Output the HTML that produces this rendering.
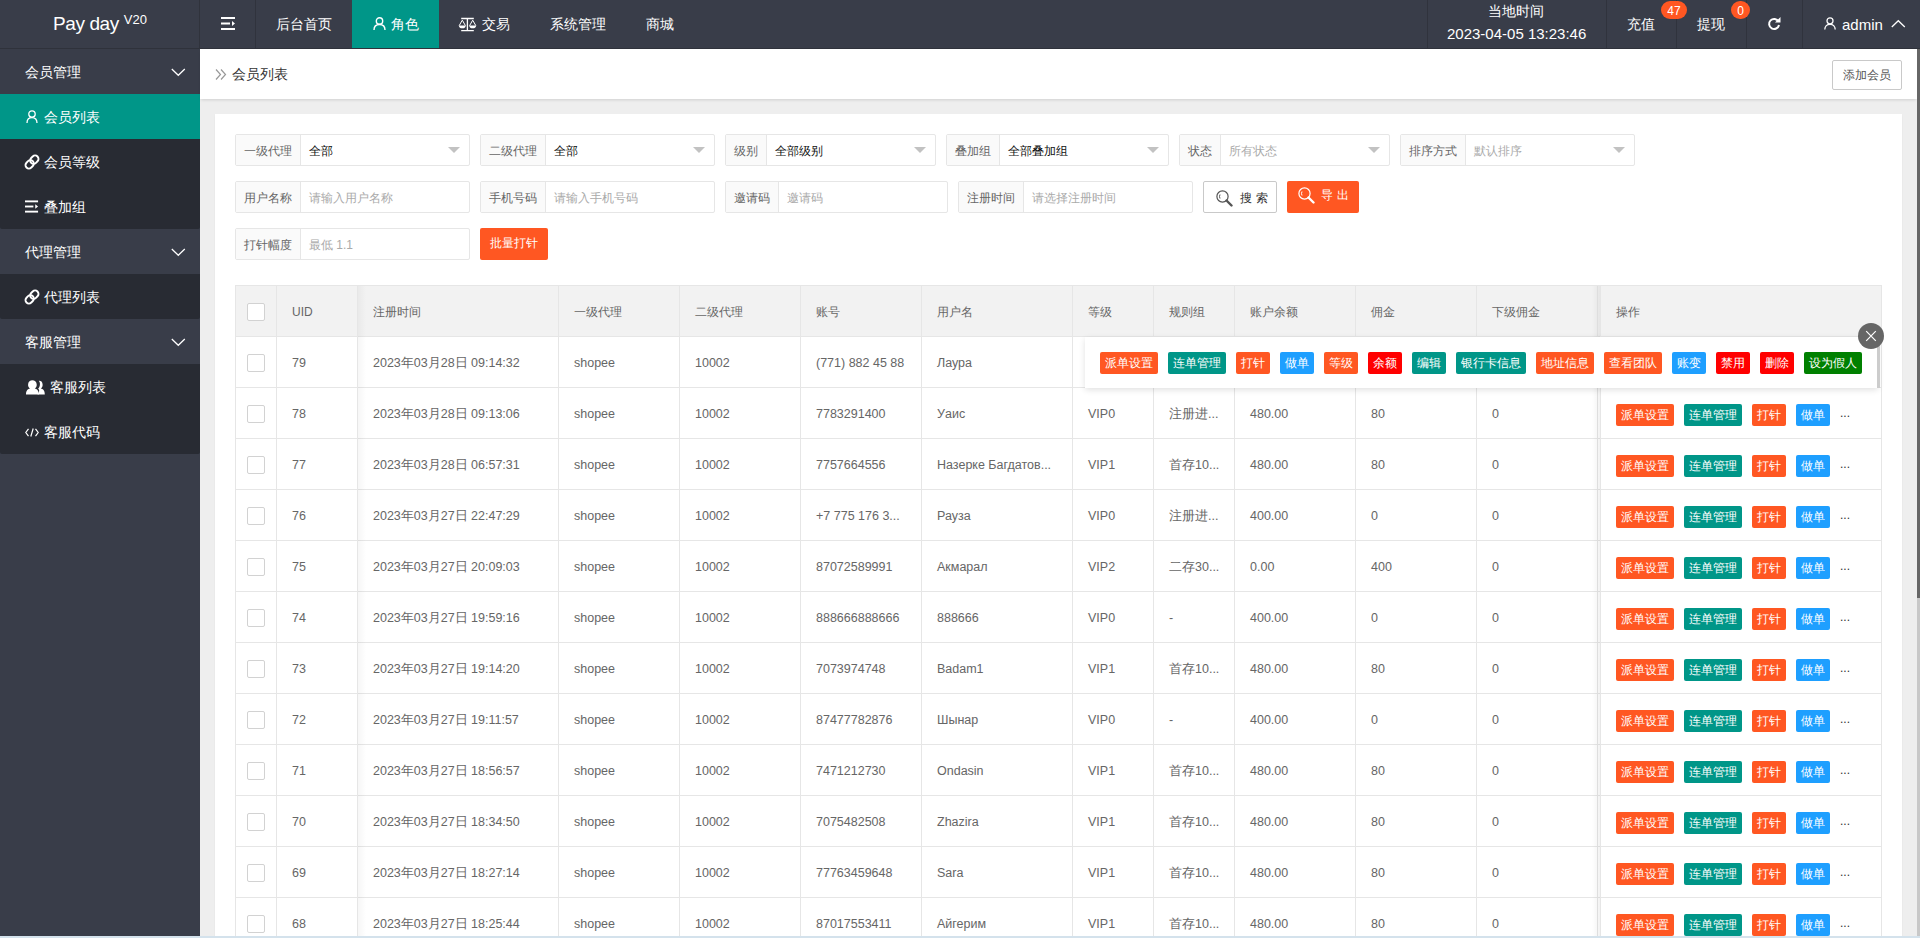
<!DOCTYPE html><html><head><meta charset="utf-8"><title>会员列表</title><style>
*{box-sizing:border-box;margin:0;padding:0}
html,body{width:1920px;height:938px;overflow:hidden;background:#eeeeee;font-family:"Liberation Sans",sans-serif;}
.a{position:absolute}
#hdr{left:0;top:0;width:1920px;height:49px;background:#393D49;border-bottom:1px solid #2f323b}
#side{left:0;top:49px;width:200px;height:889px;background:#393D49}
.nt{color:#fff;font-size:14px;white-space:nowrap;line-height:14px}
.logo{left:53px;top:13px;color:#fff;font-size:19px;letter-spacing:-0.4px;white-space:nowrap;line-height:22px}
.logo sup{font-size:13px;position:relative;top:-4px;vertical-align:top;margin-left:5px;letter-spacing:0}
.vsep{width:1px;height:48px;top:0;background:#30333d}
#crumb{left:200px;top:49px;width:1717px;height:50px;background:#fff;box-shadow:0 2px 3px -1px rgba(0,0,0,.13)}
#card{left:215px;top:114px;width:1687px;height:900px;background:#fff;box-shadow:0 1px 2px rgba(0,0,0,.05)}
.box{height:32px;border:1px solid #e6e6e6;border-radius:2px;background:#fff;top:0}
.lbl{position:absolute;left:0;top:0;height:30px;background:#FAFAFA;border-right:1px solid #e6e6e6;color:#666;font-size:12px;line-height:32px;padding-left:8px;white-space:nowrap}
.val{position:absolute;top:1px;height:30px;font-size:12px;line-height:30px;white-space:nowrap;color:#333}
.ph{color:#aaa}
.caret{position:absolute;top:12px;width:0;height:0;border-left:6px solid transparent;border-right:6px solid transparent;border-top:6px solid #c2c2c2}
.btnxs{position:absolute;height:22px;line-height:22px;font-size:12px;color:#fff;border-radius:2px;padding:0 5px;white-space:nowrap}
.or{background:#FF5722}.tl{background:#009688}.bl{background:#1E9FFF}.rd{background:#FF0000}.gr{background:#008000}
.cell{position:absolute;font-size:12.5px;color:#666;white-space:nowrap;line-height:16px}
.hcell{position:absolute;font-size:12px;color:#666;white-space:nowrap;line-height:16px}
.cb{position:absolute;width:18px;height:18px;border:1px solid #d2d2d2;border-radius:2px;background:#fff}
</style></head><body>
<div id="hdr" class="a"></div>
<div class="a logo">Pay day<sup>V20</sup></div>
<div class="a vsep" style="left:199px;height:938px;background:#30333c"></div>
<svg class="a" style="left:221px;top:17px" width="15" height="13" viewBox="0 0 15 13"><rect x="0" y="0" width="14" height="2" fill="#fff"/><rect x="0" y="5.5" width="9" height="2" fill="#fff"/><rect x="0" y="11" width="14" height="2" fill="#fff"/><path d="M11 4 L14 6.5 L11 9Z" fill="#fff"/></svg>
<div class="a vsep" style="left:255px"></div>
<div class="a nt" style="left:276px;top:17px">后台首页</div>
<div class="a" style="left:352px;top:0;width:87px;height:48px;background:#009688"></div>
<svg class="a" style="left:373px;top:17px" width="13" height="13" viewBox="0 0 13 13"><circle cx="6.5" cy="4" r="3.2" fill="none" stroke="#fff" stroke-width="1.4"/><path d="M1 13 C1 9 3.5 7.5 6.5 7.5 C9.5 7.5 12 9 12 13" fill="none" stroke="#fff" stroke-width="1.4"/></svg>
<div class="a nt" style="left:391px;top:17px">角色</div>
<svg class="a" style="left:458px;top:17px" width="19" height="15" viewBox="0 0 19 15"><path d="M3.2 1.5 H15.8 M9.4 1 V13.6 M3.2 13.6 H15.8" stroke="#fff" stroke-width="1.3" fill="none"/><path d="M4.3 3.2 L1.2 8.6 M4.3 3.2 L7.4 8.6 M14.7 3.2 L11.6 8.6 M14.7 3.2 L17.8 8.6" stroke="#fff" stroke-width="1" fill="none"/><path d="M0.8 8.4 H7.8 C7.6 10.4 6.2 11.3 4.3 11.3 C2.4 11.3 1 10.4 0.8 8.4Z M11.2 8.4 H18.2 C18 10.4 16.6 11.3 14.7 11.3 C12.8 11.3 11.4 10.4 11.2 8.4Z" fill="#fff"/></svg>
<div class="a nt" style="left:482px;top:17px">交易</div>
<div class="a nt" style="left:550px;top:17px">系统管理</div>
<div class="a nt" style="left:646px;top:17px">商城</div>
<div class="a vsep" style="left:1427px"></div>
<div class="a vsep" style="left:1606px"></div>
<div class="a vsep" style="left:1676px"></div>
<div class="a vsep" style="left:1746px"></div>
<div class="a vsep" style="left:1802px"></div>
<div class="a nt" style="left:1488px;top:4px">当地时间</div>
<div class="a nt" style="left:1447px;top:26px;font-size:15px;line-height:16px">2023-04-05 13:23:46</div>
<div class="a nt" style="left:1627px;top:17px">充值</div>
<div class="a" style="left:1661px;top:1px;width:26px;height:18px;border-radius:9px;background:#FF5722;color:#fff;font-size:12px;line-height:20px;text-align:center">47</div>
<div class="a nt" style="left:1697px;top:17px">提现</div>
<div class="a" style="left:1731px;top:1px;width:19px;height:18px;border-radius:9px;background:#FF5722;color:#fff;font-size:12px;line-height:20px;text-align:center">0</div>
<svg class="a" style="left:1767px;top:16px" width="14" height="15" viewBox="0 0 14 15"><path d="M11.5 5.5 A5 5 0 1 0 12 9" fill="none" stroke="#fff" stroke-width="2"/><path d="M13.5 1 V6.5 H8Z" fill="#fff"/></svg>
<svg class="a" style="left:1824px;top:17px" width="12" height="13" viewBox="0 0 12 13"><circle cx="6" cy="3.8" r="3" fill="none" stroke="#fff" stroke-width="1.3"/><path d="M0.8 12.6 C0.8 9 3 7.3 6 7.3 C9 7.3 11.2 9 11.2 12.6" fill="none" stroke="#fff" stroke-width="1.3"/></svg>
<div class="a nt" style="left:1842px;top:16px;font-size:15px;line-height:18px">admin</div>
<svg class="a" style="left:1891px;top:19px" width="15" height="9" viewBox="0 0 15 9"><path d="M0.8 8 L7.3 1.7 L13.8 8" fill="none" stroke="#fff" stroke-width="1.3"/></svg>
<div id="side" class="a"></div>
<div class="a" style="left:0;top:94px;width:200px;height:135px;background:#282B33;border-radius:0 0 2px 2px"></div>
<div class="a" style="left:0;top:274px;width:200px;height:45px;background:#282B33;border-radius:0 0 2px 2px"></div>
<div class="a" style="left:0;top:364px;width:200px;height:90px;background:#282B33;border-radius:0 0 2px 2px"></div>
<div class="a" style="left:0;top:94px;width:200px;height:45px;background:#009688"></div>
<div class="a nt" style="left:25px;top:65px">会员管理</div>
<svg class="a" style="left:171px;top:68px" width="15" height="9" viewBox="0 0 15 9"><path d="M0.8 1 L7.3 7.3 L13.8 1" fill="none" stroke="#fff" stroke-width="1.25"/></svg>
<div class="a nt" style="left:44px;top:110px">会员列表</div>
<div class="a nt" style="left:44px;top:155px">会员等级</div>
<div class="a nt" style="left:44px;top:200px">叠加组</div>
<div class="a nt" style="left:25px;top:245px">代理管理</div>
<svg class="a" style="left:171px;top:248px" width="15" height="9" viewBox="0 0 15 9"><path d="M0.8 1 L7.3 7.3 L13.8 1" fill="none" stroke="#fff" stroke-width="1.25"/></svg>
<div class="a nt" style="left:44px;top:290px">代理列表</div>
<div class="a nt" style="left:25px;top:335px">客服管理</div>
<svg class="a" style="left:171px;top:338px" width="15" height="9" viewBox="0 0 15 9"><path d="M0.8 1 L7.3 7.3 L13.8 1" fill="none" stroke="#fff" stroke-width="1.25"/></svg>
<div class="a nt" style="left:50px;top:380px">客服列表</div>
<div class="a nt" style="left:44px;top:425px">客服代码</div>
<svg class="a" style="left:26px;top:110px" width="12" height="13" viewBox="0 0 12 13"><circle cx="6" cy="4" r="3.2" fill="none" stroke="#fff" stroke-width="1.3"/><path d="M1 13 C1 9 3 7.6 6 7.6 C9 7.6 11 9 11 13" fill="none" stroke="#fff" stroke-width="1.3"/></svg>
<svg class="a" style="left:24px;top:154px" width="16" height="16" viewBox="0 0 16 16"><g transform="rotate(-45 8 8)" fill="none" stroke="#fff" stroke-width="1.9"><rect x="0.2" y="4.6" width="9" height="6.8" rx="3.4"/><rect x="6.8" y="4.6" width="9" height="6.8" rx="3.4"/></g></svg>
<svg class="a" style="left:24px;top:289px" width="16" height="16" viewBox="0 0 16 16"><g transform="rotate(-45 8 8)" fill="none" stroke="#fff" stroke-width="1.9"><rect x="0.2" y="4.6" width="9" height="6.8" rx="3.4"/><rect x="6.8" y="4.6" width="9" height="6.8" rx="3.4"/></g></svg>
<svg class="a" style="left:25px;top:200px" width="14" height="13" viewBox="0 0 15 13"><rect x="0" y="0" width="14" height="2" fill="#fff"/><rect x="0" y="5.5" width="9" height="2" fill="#fff"/><rect x="0" y="11" width="14" height="2" fill="#fff"/><path d="M11 4 L14 6.5 L11 9Z" fill="#fff"/></svg>
<svg class="a" style="left:26px;top:380px" width="19" height="15" viewBox="0 0 19 15"><path d="M11.5 14.5 H18.8 C18.8 10.5 17 9 14.8 8.6 C16.2 7.6 16.8 6.2 16.6 4.2 C16.4 1.8 14.8 0.6 12.8 0.8 C13.8 2 14.2 3.6 13.8 5.4 C13.5 7 12.8 8 12 8.6 C13.5 9.6 13.8 11.5 11.5 14.5Z" fill="#fff"/><path d="M0 14.5 H12.8 C12.8 10.5 10.8 9 8.8 8.6 C10.2 7.6 10.9 6.2 10.7 4.2 C10.5 1.6 8.6 0.3 6.4 0.3 C4.2 0.3 2.3 1.6 2.1 4.2 C1.9 6.2 2.6 7.6 4 8.6 C2 9 0 10.5 0 14.5Z" fill="#fff"/></svg>
<svg class="a" style="left:25px;top:428px" width="14" height="9" viewBox="0 0 14 9"><path d="M3.5 0.8 L0.8 4.5 L3.5 8.2 M10.5 0.8 L13.2 4.5 L10.5 8.2 M8.2 0.5 L5.8 8.5" fill="none" stroke="#fff" stroke-width="1.2"/></svg>
<div id="crumb" class="a"></div>
<svg class="a" style="left:215px;top:69px" width="12" height="11" viewBox="0 0 12 11"><path d="M1 0.5 L5.5 5.5 L1 10.5 M6 0.5 L10.5 5.5 L6 10.5" fill="none" stroke="#999" stroke-width="1.2"/></svg>
<div class="a" style="left:232px;top:66px;font-size:14px;line-height:16px;color:#333;white-space:nowrap">会员列表</div>
<div class="a" style="left:1832px;top:60px;width:70px;height:30px;border:1px solid #c9c9c9;border-radius:2px;background:#fff;color:#555;font-size:12px;line-height:28px;text-align:center">添加会员</div>
<div id="card" class="a"></div>
<div class="a" style="left:1917px;top:49px;width:3px;height:549px;background:#666"></div>
<div class="a" style="left:1917px;top:598px;width:3px;height:338px;background:#c8c8c8"></div>
<div class="a box" style="left:235px;top:134px;width:235px"><div class="lbl" style="width:65px">一级代理</div><div class="val" style="left:73px"><span style="color:#111">全部</span></div><div class="caret" style="left:212px"></div></div>
<div class="a box" style="left:480px;top:134px;width:235px"><div class="lbl" style="width:65px">二级代理</div><div class="val" style="left:73px"><span style="color:#111">全部</span></div><div class="caret" style="left:212px"></div></div>
<div class="a box" style="left:725px;top:134px;width:211px"><div class="lbl" style="width:41px">级别</div><div class="val" style="left:49px"><span style="color:#111">全部级别</span></div><div class="caret" style="left:188px"></div></div>
<div class="a box" style="left:946px;top:134px;width:223px"><div class="lbl" style="width:53px">叠加组</div><div class="val" style="left:61px"><span style="color:#111">全部叠加组</span></div><div class="caret" style="left:200px"></div></div>
<div class="a box" style="left:1179px;top:134px;width:211px"><div class="lbl" style="width:41px">状态</div><div class="val ph" style="left:49px">所有状态</div><div class="caret" style="left:188px"></div></div>
<div class="a box" style="left:1400px;top:134px;width:235px"><div class="lbl" style="width:65px">排序方式</div><div class="val ph" style="left:73px">默认排序</div><div class="caret" style="left:212px"></div></div>
<div class="a box" style="left:235px;top:181px;width:235px"><div class="lbl" style="width:65px">用户名称</div><div class="val ph" style="left:73px">请输入用户名称</div></div>
<div class="a box" style="left:480px;top:181px;width:235px"><div class="lbl" style="width:65px">手机号码</div><div class="val ph" style="left:73px">请输入手机号码</div></div>
<div class="a box" style="left:725px;top:181px;width:223px"><div class="lbl" style="width:53px">邀请码</div><div class="val ph" style="left:61px">邀请码</div></div>
<div class="a box" style="left:958px;top:181px;width:235px"><div class="lbl" style="width:65px">注册时间</div><div class="val ph" style="left:73px">请选择注册时间</div></div>
<div class="a box" style="left:235px;top:228px;width:235px"><div class="lbl" style="width:65px">打针幅度</div><div class="val ph" style="left:73px">最低 1.1</div></div>
<div class="a" style="left:1203px;top:181px;width:74px;height:32px;border:1px solid #c9c9c9;border-radius:2px;background:#fff"><svg style="position:absolute;left:12px;top:8px" width="17" height="17" viewBox="0 0 17 17"><circle cx="6.5" cy="6.5" r="5.6" fill="none" stroke="#555" stroke-width="1.2"/><path d="M4 4.5 Q3 6.5 4 8.5" fill="none" stroke="#555" stroke-width="1"/><path d="M10.5 10.5 L15.5 15.5" stroke="#555" stroke-width="2.4" stroke-linecap="round"/></svg><div style="position:absolute;left:36px;top:8px;font-size:12px;line-height:16px;color:#333;letter-spacing:4px;white-space:nowrap">搜索</div></div>
<div class="a" style="left:1287px;top:181px;width:72px;height:32px;border-radius:2px;background:#FF5722"><svg style="position:absolute;left:11px;top:6px" width="17" height="17" viewBox="0 0 17 17"><circle cx="6.5" cy="6.5" r="5.6" fill="none" stroke="#fff" stroke-width="1.2"/><path d="M4 4.5 Q3 6.5 4 8.5" fill="none" stroke="#fff" stroke-width="1"/><path d="M10.5 10.5 L15.5 15.5" stroke="#fff" stroke-width="2.4" stroke-linecap="round"/></svg><div style="position:absolute;left:34px;top:6px;font-size:12px;line-height:16px;color:#fff;letter-spacing:4px;white-space:nowrap">导出</div></div>
<div class="a" style="left:480px;top:228px;width:68px;height:32px;border-radius:2px;background:#FF5722;color:#fff;font-size:12px;line-height:30px;text-align:center">批量打针</div>
<div class="a" style="left:235px;top:285px;width:1647px;height:51px;background:#f2f2f2"></div>
<div class="a" style="left:235px;top:285px;width:1647px;height:1px;background:#e6e6e6"></div>
<div class="a" style="left:235px;top:336px;width:1647px;height:1px;background:#e6e6e6"></div>
<div class="a" style="left:235px;top:387px;width:1647px;height:1px;background:#e6e6e6"></div>
<div class="a" style="left:235px;top:438px;width:1647px;height:1px;background:#e6e6e6"></div>
<div class="a" style="left:235px;top:489px;width:1647px;height:1px;background:#e6e6e6"></div>
<div class="a" style="left:235px;top:540px;width:1647px;height:1px;background:#e6e6e6"></div>
<div class="a" style="left:235px;top:591px;width:1647px;height:1px;background:#e6e6e6"></div>
<div class="a" style="left:235px;top:642px;width:1647px;height:1px;background:#e6e6e6"></div>
<div class="a" style="left:235px;top:693px;width:1647px;height:1px;background:#e6e6e6"></div>
<div class="a" style="left:235px;top:744px;width:1647px;height:1px;background:#e6e6e6"></div>
<div class="a" style="left:235px;top:795px;width:1647px;height:1px;background:#e6e6e6"></div>
<div class="a" style="left:235px;top:846px;width:1647px;height:1px;background:#e6e6e6"></div>
<div class="a" style="left:235px;top:897px;width:1647px;height:1px;background:#e6e6e6"></div>
<div class="a" style="left:235px;top:948px;width:1647px;height:1px;background:#e6e6e6"></div>
<div class="a" style="left:235px;top:285px;width:1px;height:663px;background:#e6e6e6"></div>
<div class="a" style="left:276px;top:285px;width:1px;height:663px;background:#e6e6e6"></div>
<div class="a" style="left:357px;top:285px;width:1px;height:663px;background:#e6e6e6"></div>
<div class="a" style="left:558px;top:285px;width:1px;height:663px;background:#e6e6e6"></div>
<div class="a" style="left:679px;top:285px;width:1px;height:663px;background:#e6e6e6"></div>
<div class="a" style="left:800px;top:285px;width:1px;height:663px;background:#e6e6e6"></div>
<div class="a" style="left:921px;top:285px;width:1px;height:663px;background:#e6e6e6"></div>
<div class="a" style="left:1072px;top:285px;width:1px;height:663px;background:#e6e6e6"></div>
<div class="a" style="left:1153px;top:285px;width:1px;height:663px;background:#e6e6e6"></div>
<div class="a" style="left:1234px;top:285px;width:1px;height:663px;background:#e6e6e6"></div>
<div class="a" style="left:1355px;top:285px;width:1px;height:663px;background:#e6e6e6"></div>
<div class="a" style="left:1476px;top:285px;width:1px;height:663px;background:#e6e6e6"></div>
<div class="a" style="left:1597px;top:285px;width:1px;height:663px;background:#e6e6e6"></div>
<div class="a" style="left:1600px;top:285px;width:1px;height:663px;background:#e6e6e6"></div>
<div class="a" style="left:1881px;top:285px;width:1px;height:663px;background:#e6e6e6"></div>
<div class="a" style="left:358px;top:286px;width:8px;height:663px;background:linear-gradient(to right,rgba(0,0,0,.035),rgba(0,0,0,0))"></div>
<div class="a" style="left:1592px;top:286px;width:8px;height:663px;background:linear-gradient(to left,rgba(0,0,0,.05),rgba(0,0,0,0))"></div>
<div class="hcell" style="left:292px;top:304px">UID</div>
<div class="hcell" style="left:373px;top:304px">注册时间</div>
<div class="hcell" style="left:574px;top:304px">一级代理</div>
<div class="hcell" style="left:695px;top:304px">二级代理</div>
<div class="hcell" style="left:816px;top:304px">账号</div>
<div class="hcell" style="left:937px;top:304px">用户名</div>
<div class="hcell" style="left:1088px;top:304px">等级</div>
<div class="hcell" style="left:1169px;top:304px">规则组</div>
<div class="hcell" style="left:1250px;top:304px">账户余额</div>
<div class="hcell" style="left:1371px;top:304px">佣金</div>
<div class="hcell" style="left:1492px;top:304px">下级佣金</div>
<div class="hcell" style="left:1616px;top:304px">操作</div>
<div class="cb" style="left:247px;top:303px"></div>
<div class="cb" style="left:247px;top:354px"></div>
<div class="cell" style="left:292px;top:355px">79</div>
<div class="cell" style="left:373px;top:355px">2023年03月28日 09:14:32</div>
<div class="cell" style="left:574px;top:355px">shopee</div>
<div class="cell" style="left:695px;top:355px">10002</div>
<div class="cell" style="left:816px;top:355px">(771) 882 45 88</div>
<div class="cell" style="left:937px;top:355px">Лаура</div>
<div class="cell" style="left:1088px;top:355px">VIP0</div>
<div class="cb" style="left:247px;top:405px"></div>
<div class="cell" style="left:292px;top:406px">78</div>
<div class="cell" style="left:373px;top:406px">2023年03月28日 09:13:06</div>
<div class="cell" style="left:574px;top:406px">shopee</div>
<div class="cell" style="left:695px;top:406px">10002</div>
<div class="cell" style="left:816px;top:406px">7783291400</div>
<div class="cell" style="left:937px;top:406px">Уаис</div>
<div class="cell" style="left:1088px;top:406px">VIP0</div>
<div class="cell" style="left:1169px;top:406px">注册进...</div>
<div class="cell" style="left:1250px;top:406px">480.00</div>
<div class="cell" style="left:1371px;top:406px">80</div>
<div class="cell" style="left:1492px;top:406px">0</div>
<div class="btnxs or" style="left:1616px;top:404px;width:58px">派单设置</div>
<div class="btnxs tl" style="left:1684px;top:404px;width:58px">连单管理</div>
<div class="btnxs or" style="left:1752px;top:404px;width:34px">打针</div>
<div class="btnxs bl" style="left:1796px;top:404px;width:34px">做单</div>
<div class="cell" style="left:1840px;top:405px;font-size:12px;color:#333">...</div>
<div class="cb" style="left:247px;top:456px"></div>
<div class="cell" style="left:292px;top:457px">77</div>
<div class="cell" style="left:373px;top:457px">2023年03月28日 06:57:31</div>
<div class="cell" style="left:574px;top:457px">shopee</div>
<div class="cell" style="left:695px;top:457px">10002</div>
<div class="cell" style="left:816px;top:457px">7757664556</div>
<div class="cell" style="left:937px;top:457px">Назерке Багдатов...</div>
<div class="cell" style="left:1088px;top:457px">VIP1</div>
<div class="cell" style="left:1169px;top:457px">首存10...</div>
<div class="cell" style="left:1250px;top:457px">480.00</div>
<div class="cell" style="left:1371px;top:457px">80</div>
<div class="cell" style="left:1492px;top:457px">0</div>
<div class="btnxs or" style="left:1616px;top:455px;width:58px">派单设置</div>
<div class="btnxs tl" style="left:1684px;top:455px;width:58px">连单管理</div>
<div class="btnxs or" style="left:1752px;top:455px;width:34px">打针</div>
<div class="btnxs bl" style="left:1796px;top:455px;width:34px">做单</div>
<div class="cell" style="left:1840px;top:456px;font-size:12px;color:#333">...</div>
<div class="cb" style="left:247px;top:507px"></div>
<div class="cell" style="left:292px;top:508px">76</div>
<div class="cell" style="left:373px;top:508px">2023年03月27日 22:47:29</div>
<div class="cell" style="left:574px;top:508px">shopee</div>
<div class="cell" style="left:695px;top:508px">10002</div>
<div class="cell" style="left:816px;top:508px">+7 775 176 3...</div>
<div class="cell" style="left:937px;top:508px">Рауза</div>
<div class="cell" style="left:1088px;top:508px">VIP0</div>
<div class="cell" style="left:1169px;top:508px">注册进...</div>
<div class="cell" style="left:1250px;top:508px">400.00</div>
<div class="cell" style="left:1371px;top:508px">0</div>
<div class="cell" style="left:1492px;top:508px">0</div>
<div class="btnxs or" style="left:1616px;top:506px;width:58px">派单设置</div>
<div class="btnxs tl" style="left:1684px;top:506px;width:58px">连单管理</div>
<div class="btnxs or" style="left:1752px;top:506px;width:34px">打针</div>
<div class="btnxs bl" style="left:1796px;top:506px;width:34px">做单</div>
<div class="cell" style="left:1840px;top:507px;font-size:12px;color:#333">...</div>
<div class="cb" style="left:247px;top:558px"></div>
<div class="cell" style="left:292px;top:559px">75</div>
<div class="cell" style="left:373px;top:559px">2023年03月27日 20:09:03</div>
<div class="cell" style="left:574px;top:559px">shopee</div>
<div class="cell" style="left:695px;top:559px">10002</div>
<div class="cell" style="left:816px;top:559px">87072589991</div>
<div class="cell" style="left:937px;top:559px">Акмарал</div>
<div class="cell" style="left:1088px;top:559px">VIP2</div>
<div class="cell" style="left:1169px;top:559px">二存30...</div>
<div class="cell" style="left:1250px;top:559px">0.00</div>
<div class="cell" style="left:1371px;top:559px">400</div>
<div class="cell" style="left:1492px;top:559px">0</div>
<div class="btnxs or" style="left:1616px;top:557px;width:58px">派单设置</div>
<div class="btnxs tl" style="left:1684px;top:557px;width:58px">连单管理</div>
<div class="btnxs or" style="left:1752px;top:557px;width:34px">打针</div>
<div class="btnxs bl" style="left:1796px;top:557px;width:34px">做单</div>
<div class="cell" style="left:1840px;top:558px;font-size:12px;color:#333">...</div>
<div class="cb" style="left:247px;top:609px"></div>
<div class="cell" style="left:292px;top:610px">74</div>
<div class="cell" style="left:373px;top:610px">2023年03月27日 19:59:16</div>
<div class="cell" style="left:574px;top:610px">shopee</div>
<div class="cell" style="left:695px;top:610px">10002</div>
<div class="cell" style="left:816px;top:610px">888666888666</div>
<div class="cell" style="left:937px;top:610px">888666</div>
<div class="cell" style="left:1088px;top:610px">VIP0</div>
<div class="cell" style="left:1169px;top:610px">-</div>
<div class="cell" style="left:1250px;top:610px">400.00</div>
<div class="cell" style="left:1371px;top:610px">0</div>
<div class="cell" style="left:1492px;top:610px">0</div>
<div class="btnxs or" style="left:1616px;top:608px;width:58px">派单设置</div>
<div class="btnxs tl" style="left:1684px;top:608px;width:58px">连单管理</div>
<div class="btnxs or" style="left:1752px;top:608px;width:34px">打针</div>
<div class="btnxs bl" style="left:1796px;top:608px;width:34px">做单</div>
<div class="cell" style="left:1840px;top:609px;font-size:12px;color:#333">...</div>
<div class="cb" style="left:247px;top:660px"></div>
<div class="cell" style="left:292px;top:661px">73</div>
<div class="cell" style="left:373px;top:661px">2023年03月27日 19:14:20</div>
<div class="cell" style="left:574px;top:661px">shopee</div>
<div class="cell" style="left:695px;top:661px">10002</div>
<div class="cell" style="left:816px;top:661px">7073974748</div>
<div class="cell" style="left:937px;top:661px">Badam1</div>
<div class="cell" style="left:1088px;top:661px">VIP1</div>
<div class="cell" style="left:1169px;top:661px">首存10...</div>
<div class="cell" style="left:1250px;top:661px">480.00</div>
<div class="cell" style="left:1371px;top:661px">80</div>
<div class="cell" style="left:1492px;top:661px">0</div>
<div class="btnxs or" style="left:1616px;top:659px;width:58px">派单设置</div>
<div class="btnxs tl" style="left:1684px;top:659px;width:58px">连单管理</div>
<div class="btnxs or" style="left:1752px;top:659px;width:34px">打针</div>
<div class="btnxs bl" style="left:1796px;top:659px;width:34px">做单</div>
<div class="cell" style="left:1840px;top:660px;font-size:12px;color:#333">...</div>
<div class="cb" style="left:247px;top:711px"></div>
<div class="cell" style="left:292px;top:712px">72</div>
<div class="cell" style="left:373px;top:712px">2023年03月27日 19:11:57</div>
<div class="cell" style="left:574px;top:712px">shopee</div>
<div class="cell" style="left:695px;top:712px">10002</div>
<div class="cell" style="left:816px;top:712px">87477782876</div>
<div class="cell" style="left:937px;top:712px">Шынар</div>
<div class="cell" style="left:1088px;top:712px">VIP0</div>
<div class="cell" style="left:1169px;top:712px">-</div>
<div class="cell" style="left:1250px;top:712px">400.00</div>
<div class="cell" style="left:1371px;top:712px">0</div>
<div class="cell" style="left:1492px;top:712px">0</div>
<div class="btnxs or" style="left:1616px;top:710px;width:58px">派单设置</div>
<div class="btnxs tl" style="left:1684px;top:710px;width:58px">连单管理</div>
<div class="btnxs or" style="left:1752px;top:710px;width:34px">打针</div>
<div class="btnxs bl" style="left:1796px;top:710px;width:34px">做单</div>
<div class="cell" style="left:1840px;top:711px;font-size:12px;color:#333">...</div>
<div class="cb" style="left:247px;top:762px"></div>
<div class="cell" style="left:292px;top:763px">71</div>
<div class="cell" style="left:373px;top:763px">2023年03月27日 18:56:57</div>
<div class="cell" style="left:574px;top:763px">shopee</div>
<div class="cell" style="left:695px;top:763px">10002</div>
<div class="cell" style="left:816px;top:763px">7471212730</div>
<div class="cell" style="left:937px;top:763px">Ondasin</div>
<div class="cell" style="left:1088px;top:763px">VIP1</div>
<div class="cell" style="left:1169px;top:763px">首存10...</div>
<div class="cell" style="left:1250px;top:763px">480.00</div>
<div class="cell" style="left:1371px;top:763px">80</div>
<div class="cell" style="left:1492px;top:763px">0</div>
<div class="btnxs or" style="left:1616px;top:761px;width:58px">派单设置</div>
<div class="btnxs tl" style="left:1684px;top:761px;width:58px">连单管理</div>
<div class="btnxs or" style="left:1752px;top:761px;width:34px">打针</div>
<div class="btnxs bl" style="left:1796px;top:761px;width:34px">做单</div>
<div class="cell" style="left:1840px;top:762px;font-size:12px;color:#333">...</div>
<div class="cb" style="left:247px;top:813px"></div>
<div class="cell" style="left:292px;top:814px">70</div>
<div class="cell" style="left:373px;top:814px">2023年03月27日 18:34:50</div>
<div class="cell" style="left:574px;top:814px">shopee</div>
<div class="cell" style="left:695px;top:814px">10002</div>
<div class="cell" style="left:816px;top:814px">7075482508</div>
<div class="cell" style="left:937px;top:814px">Zhazira</div>
<div class="cell" style="left:1088px;top:814px">VIP1</div>
<div class="cell" style="left:1169px;top:814px">首存10...</div>
<div class="cell" style="left:1250px;top:814px">480.00</div>
<div class="cell" style="left:1371px;top:814px">80</div>
<div class="cell" style="left:1492px;top:814px">0</div>
<div class="btnxs or" style="left:1616px;top:812px;width:58px">派单设置</div>
<div class="btnxs tl" style="left:1684px;top:812px;width:58px">连单管理</div>
<div class="btnxs or" style="left:1752px;top:812px;width:34px">打针</div>
<div class="btnxs bl" style="left:1796px;top:812px;width:34px">做单</div>
<div class="cell" style="left:1840px;top:813px;font-size:12px;color:#333">...</div>
<div class="cb" style="left:247px;top:864px"></div>
<div class="cell" style="left:292px;top:865px">69</div>
<div class="cell" style="left:373px;top:865px">2023年03月27日 18:27:14</div>
<div class="cell" style="left:574px;top:865px">shopee</div>
<div class="cell" style="left:695px;top:865px">10002</div>
<div class="cell" style="left:816px;top:865px">77763459648</div>
<div class="cell" style="left:937px;top:865px">Sara</div>
<div class="cell" style="left:1088px;top:865px">VIP1</div>
<div class="cell" style="left:1169px;top:865px">首存10...</div>
<div class="cell" style="left:1250px;top:865px">480.00</div>
<div class="cell" style="left:1371px;top:865px">80</div>
<div class="cell" style="left:1492px;top:865px">0</div>
<div class="btnxs or" style="left:1616px;top:863px;width:58px">派单设置</div>
<div class="btnxs tl" style="left:1684px;top:863px;width:58px">连单管理</div>
<div class="btnxs or" style="left:1752px;top:863px;width:34px">打针</div>
<div class="btnxs bl" style="left:1796px;top:863px;width:34px">做单</div>
<div class="cell" style="left:1840px;top:864px;font-size:12px;color:#333">...</div>
<div class="cb" style="left:247px;top:915px"></div>
<div class="cell" style="left:292px;top:916px">68</div>
<div class="cell" style="left:373px;top:916px">2023年03月27日 18:25:44</div>
<div class="cell" style="left:574px;top:916px">shopee</div>
<div class="cell" style="left:695px;top:916px">10002</div>
<div class="cell" style="left:816px;top:916px">87017553411</div>
<div class="cell" style="left:937px;top:916px">Айгерим</div>
<div class="cell" style="left:1088px;top:916px">VIP1</div>
<div class="cell" style="left:1169px;top:916px">首存10...</div>
<div class="cell" style="left:1250px;top:916px">480.00</div>
<div class="cell" style="left:1371px;top:916px">80</div>
<div class="cell" style="left:1492px;top:916px">0</div>
<div class="btnxs or" style="left:1616px;top:914px;width:58px">派单设置</div>
<div class="btnxs tl" style="left:1684px;top:914px;width:58px">连单管理</div>
<div class="btnxs or" style="left:1752px;top:914px;width:34px">打针</div>
<div class="btnxs bl" style="left:1796px;top:914px;width:34px">做单</div>
<div class="cell" style="left:1840px;top:915px;font-size:12px;color:#333">...</div>
<div class="a" style="left:1085px;top:337px;width:793px;height:51px;background:#fff;box-shadow:0 2px 6px rgba(0,0,0,.12)"></div>
<div class="a" style="left:1877px;top:346px;width:3px;height:42px;background:#cccccc"></div>
<div class="btnxs or" style="left:1100px;top:352px;width:58px">派单设置</div>
<div class="btnxs tl" style="left:1168px;top:352px;width:58px">连单管理</div>
<div class="btnxs or" style="left:1236px;top:352px;width:34px">打针</div>
<div class="btnxs bl" style="left:1280px;top:352px;width:34px">做单</div>
<div class="btnxs or" style="left:1324px;top:352px;width:34px">等级</div>
<div class="btnxs rd" style="left:1368px;top:352px;width:34px">余额</div>
<div class="btnxs tl" style="left:1412px;top:352px;width:34px">编辑</div>
<div class="btnxs tl" style="left:1456px;top:352px;width:70px">银行卡信息</div>
<div class="btnxs or" style="left:1536px;top:352px;width:58px">地址信息</div>
<div class="btnxs or" style="left:1604px;top:352px;width:58px">查看团队</div>
<div class="btnxs bl" style="left:1672px;top:352px;width:34px">账变</div>
<div class="btnxs rd" style="left:1716px;top:352px;width:34px">禁用</div>
<div class="btnxs rd" style="left:1760px;top:352px;width:34px">删除</div>
<div class="btnxs gr" style="left:1804px;top:352px;width:58px">设为假人</div>
<svg class="a" style="left:1857px;top:322px" width="28" height="28" viewBox="0 0 28 28"><circle cx="14" cy="14" r="13" fill="#666"/><path d="M9.2 9.2 L18.8 18.8 M18.8 9.2 L9.2 18.8" stroke="#fff" stroke-width="1.2"/></svg>
<div class="a" style="left:0;top:936px;width:1920px;height:2px;background:#d4e2ec"></div>
</body></html>
